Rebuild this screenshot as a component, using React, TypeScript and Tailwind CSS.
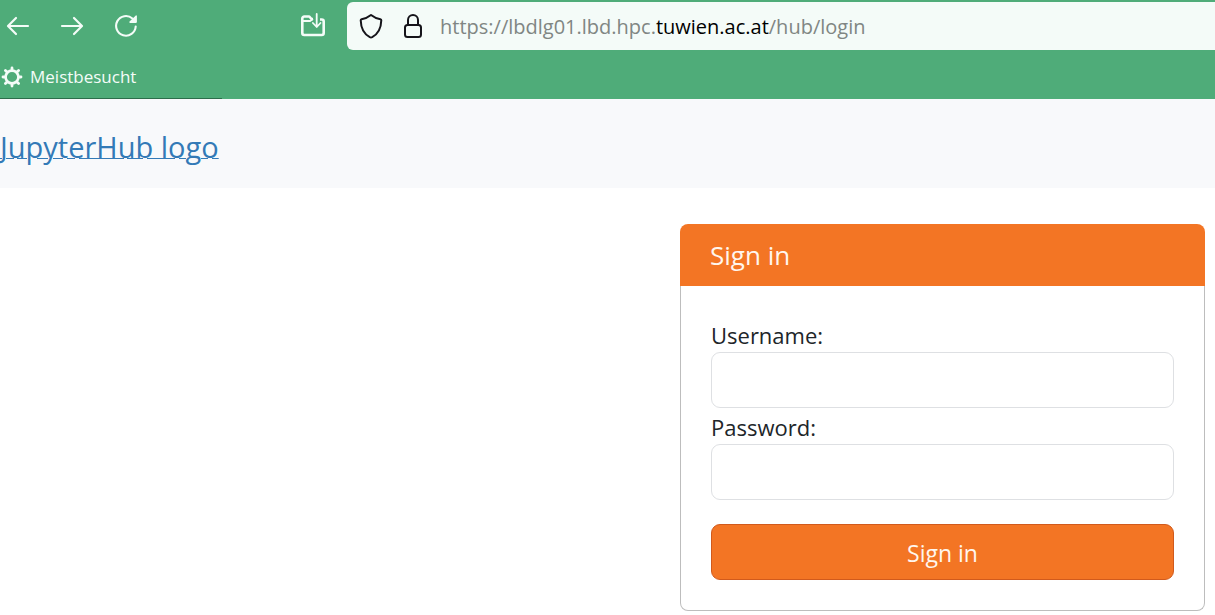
import React from "react";

function BackIcon() {
  return (
    <svg width="24" height="24" viewBox="0 0 24 24" fill="none" stroke="currentColor" strokeWidth="2.2" strokeLinecap="round" strokeLinejoin="round" aria-hidden="true">
      <path d="M22 12H2.500M10 4L2 12l8 8" />
    </svg>
  );
}

function ForwardIcon() {
  return (
    <svg width="24" height="24" viewBox="0 0 24 24" fill="none" stroke="currentColor" strokeWidth="2.2" strokeLinecap="round" strokeLinejoin="round" aria-hidden="true">
      <path d="M2 12h19.500M14 4l8 8-8 8" />
    </svg>
  );
}

function ReloadIcon() {
  return (
    <svg width="24" height="24" viewBox="0 0 24 24" fill="none" aria-hidden="true">
      <path d="M21.700 12.500A9.800 9.800 0 1 1 18.400 4.500" stroke="currentColor" strokeWidth="2.100" strokeLinecap="round" />
      <path d="M21.800 1.500a.7.7 0 0 1 1.100.6v6a.8.8 0 0 1-.8.8h-6a.8.8 0 0 1-.6-1.300z" fill="currentColor" />
    </svg>
  );
}

function FolderIcon() {
  return (
    <svg width="26" height="26" viewBox="0 0 26 26" fill="none" stroke="currentColor" aria-hidden="true">
      <path d="M20 6.500h1.700a2 2 0 0 1 2 2V20a2 2 0 0 1-2 2H4.300a2 2 0 0 1-2-2V5.500a2 2 0 0 1 2-2h5L11.500 6H13" strokeWidth="2.600" strokeLinejoin="round" />
      <path d="M3 8h7l3-2" strokeWidth="1.800" />
      <path d="M16.700 1v12.500M12.900 10l3.800 4 3.800-4" strokeWidth="1.800" strokeLinecap="round" strokeLinejoin="round" />
    </svg>
  );
}

function ShieldIcon() {
  return (
    <svg width="24" height="26" viewBox="0 0 24 26" fill="none" stroke="currentColor" strokeWidth="2" strokeLinejoin="round" aria-hidden="true">
      <path d="M12 2C9.500 4 6 5.600 2.600 6.200 2 6.300 1.700 6.700 1.700 7.300 1.900 15 4.500 20.800 10.800 24.200q1.200.6 2.400 0C19.500 20.800 22.100 15 22.300 7.300c0-.6-.3-1-.9-1.100C18 5.600 14.500 4 12 2z" />
    </svg>
  );
}

function LockIcon() {
  return (
    <svg width="20" height="26" viewBox="0 0 20 26" fill="none" stroke="currentColor" strokeWidth="2" aria-hidden="true">
      <rect x="2" y="12" width="16" height="12" rx="2.500" />
      <path d="M5 12V7a5 5 0 0 1 10 0v5" />
    </svg>
  );
}

function GearIcon() {
  return (
    <svg width="24" height="24" viewBox="0 0 24 24" fill="none" stroke="currentColor" aria-hidden="true">
      <circle cx="12" cy="12" r="6.400" strokeWidth="2.600" />
      <path d="M12 3v2M12 19v2M3 12h2M19 12h2M5.400 5.400l1.700 1.700M16.900 16.900l1.700 1.700M5.400 18.600l1.700-1.700M16.900 7.100l1.700-1.700" strokeWidth="2.800" strokeLinecap="round" />
    </svg>
  );
}

function BrowserChrome() {
  return (
    <header className="bg-[#4fac79] text-[#f4fcf8]">
      <div className="flex items-center pt-0.5">
        <nav aria-label="Browser" className="flex shrink-0 items-center gap-[30px] pl-[6px]">
          <button type="button" aria-label="Back"><BackIcon /></button>
          <button type="button" aria-label="Forward"><ForwardIcon /></button>
          <button type="button" aria-label="Reload"><ReloadIcon /></button>
        </nav>
        <button type="button" aria-label="Save to folder" className="ml-[162px] shrink-0"><FolderIcon /></button>
        <div className="ml-[21px] flex h-12 min-w-0 flex-1 items-center rounded-l-md bg-[#f4fbf8] pl-3 text-[#15141a]">
          <button type="button" aria-label="Tracking protection"><ShieldIcon /></button>
          <button type="button" aria-label="Connection security" className="ml-5"><LockIcon /></button>
          <div
            role="textbox"
            aria-label="Address"
            contentEditable
            suppressContentEditableWarning
            spellCheck={false}
            className="ml-[17px] flex-1 truncate pt-0.5 text-xl text-[#808683] outline-none"
          >
            https://lbdlg01.lbd.hpc.<span className="text-black">tuwien.ac.at</span>/hub/login
          </div>
        </div>
      </div>
      <div className="flex h-[49px] flex-col">
        <a href="#bookmarks" className="flex flex-1 items-center gap-1.5 pt-1.5 text-[17px]">
          <GearIcon />
          Meistbesucht
        </a>
        <div className="h-px w-[222px] bg-[#2c6e4b]" />
      </div>
    </header>
  );
}

function Field({ id, label, type }: { id: string; label: string; type: string }) {
  return (
    <div>
      <label htmlFor={id} className="block pt-0.5 text-[22px] leading-[34px]">{label}</label>
      <input
        id={id}
        name={id}
        type={type}
        className="block h-14 w-full rounded-[9px] border border-[#dee0e3] bg-white px-4 text-[22px] outline-none"
      />
    </div>
  );
}

export default function App() {
  return (
    <div className="min-h-screen overflow-x-hidden bg-white font-['Open_Sans','Noto_Sans',sans-serif] text-[#212529]">
      <BrowserChrome />
      <div className="flex h-[89px] items-center bg-[#f8f9fb] pt-1.5">
        <a href="#home" className="text-[29px] text-[#337ab7] underline decoration-1 underline-offset-0">
          JupyterHub logo
        </a>
      </div>
      <main className="flex justify-end px-[10px] pt-9">
        <form className="w-full max-w-[525px]" onSubmit={(e) => e.preventDefault()}>
          <h1 className="rounded-t-lg bg-[#f37524] px-[30px] py-[13px] text-[26px] leading-9 text-[#fff6ee]">Sign in</h1>
          <div className="rounded-b-lg border border-t-0 border-[#bdbdbd] p-[30px]">
            <Field id="username" label="Username:" type="text" />
            <Field id="password" label="Password:" type="password" />
            <button
              type="submit"
              className="mt-6 h-14 w-full rounded-[9px] border border-[#d15a1c] bg-[#f37524] pt-0.5 text-[23px] text-[#fff6ee]"
            >
              Sign in
            </button>
          </div>
        </form>
      </main>
    </div>
  );
}
